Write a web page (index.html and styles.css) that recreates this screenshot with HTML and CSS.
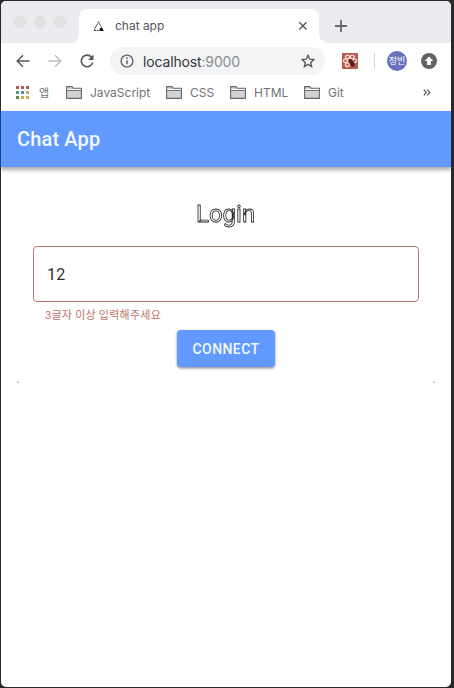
FILE: index.html
```html
<!DOCTYPE html>
<html lang="ko">
<head>
<meta charset="utf-8">
<title>chat app</title>
<link rel="stylesheet" href="styles.css">
</head>
<body>
<div class="window">
  <header class="tabs">
    <div class="lights"><i></i><i></i><i></i></div>
    <div class="tab">
      <svg class="favicon" width="12" height="11" viewBox="0 0 12 11"><path d="M5.500.8 1 9.500h9L5.500.8" fill="none" stroke="#444" stroke-width="1" stroke-dasharray="2 .5"/><path d="M6.500 7.500 9 6.500l1.700 3.500H7z" fill="#111"/></svg>
      <span class="tab-title">chat app</span>
      <svg class="close" width="10" height="10" viewBox="0 0 10 10"><path d="m1.300 1.300 7.200 7.200m0-7.200L1.300 8.500" fill="none" stroke="#5b5d60" stroke-width="1.500"/></svg>
    </div>
    <svg class="plus" width="12" height="12" viewBox="0 0 12 12"><path d="M6 0v12M0 6h12" stroke="#66686b" stroke-width="1.800"/></svg>
  </header>
  <nav class="toolbar">
    <svg class="back" width="14" height="14" viewBox="0 0 14 14"><path d="M13.500 7H1.400M7 1.200 1.200 7 7 12.800" fill="none" stroke="#56585b" stroke-width="1.500"/></svg>
    <svg class="forward" width="14" height="14" viewBox="0 0 14 14"><path d="M.5 7h12.100M7 1.200 12.800 7 7 12.800" fill="none" stroke="#bfc0c2" stroke-width="1.500"/></svg>
    <svg class="reload" width="14" height="14" viewBox="0 0 14 14"><path d="M11.600 3.200A5.800 5.800 0 1 0 12.700 8.500" fill="none" stroke="#56585b" stroke-width="1.600"/><path d="M13.500.5v5.600H8z" fill="#56585b"/></svg>
    <div class="address">
      <svg width="14" height="14" viewBox="0 0 14 14"><circle cx="7" cy="7" r="5.900" fill="none" stroke="#626468" stroke-width="1.400"/><path d="M7 6.200v4M7 3.600v1.500" stroke="#626468" stroke-width="1.500"/></svg>
      <span class="url">localhost<span>:9000</span></span>
      <svg class="star" width="14" height="14" viewBox="0 0 14 14"><path d="m7 1.300 1.650 3.900 4.250.4-3.200 2.800.95 4.150L7 10.350l-3.650 2.200.95-4.150L1.100 5.600l4.250-.4z" fill="none" stroke="#55575a" stroke-width="1.300"/></svg>
    </div>
    <svg class="extension" width="16" height="16" viewBox="0 0 16 16"><rect width="16" height="16" rx="1" fill="#b95a50"/><g fill="none" stroke="#fae5df" stroke-width="1.200"><circle cx="5.500" cy="4" r="1.900"/><circle cx="10.300" cy="4" r="1.900"/><circle cx="12.500" cy="7.800" r="1.900"/><circle cx="3.500" cy="7.800" r="1.900"/><circle cx="5.300" cy="11.700" r="1.900"/></g><path d="m7 6 3 .5 3 4.500-1 3-3-1-2-4z" fill="#55201d"/></svg>
    <i class="divider"></i>
    <span class="avatar">정빈</span>
    <svg class="update" width="16" height="16" viewBox="0 0 16 16"><circle cx="8" cy="8" r="8" fill="#626365"/><path d="m8 3.500 4.300 4.500H10v4H6V8H3.700z" fill="#fff"/></svg>
  </nav>
  <nav class="bookmarks">
    <span class="apps"><i></i><i></i><i></i><i></i><i></i><i></i><i></i><i></i><i></i></span>
    <span class="label apps-label">앱</span>
    <svg class="folder" width="16" height="13" viewBox="0 0 16 13"><path d="M.6 12.400V.6h5.200L7.300 2.200h8.100v10.200z" fill="#d2d2d2" stroke="#66676a" stroke-width="1.100"/><path d="M1.200 3.500h13.600" stroke="#fff"/><path d="M.6 4.500h14.800" stroke="#66676a" stroke-width=".9"/></svg>
    <span class="label js">JavaScript</span>
    <svg class="folder" width="16" height="13" viewBox="0 0 16 13"><path d="M.6 12.400V.6h5.200L7.300 2.200h8.100v10.200z" fill="#d2d2d2" stroke="#66676a" stroke-width="1.100"/><path d="M1.200 3.500h13.600" stroke="#fff"/><path d="M.6 4.500h14.800" stroke="#66676a" stroke-width=".9"/></svg>
    <span class="label css">CSS</span>
    <svg class="folder" width="16" height="13" viewBox="0 0 16 13"><path d="M.6 12.400V.6h5.200L7.300 2.200h8.100v10.200z" fill="#d2d2d2" stroke="#66676a" stroke-width="1.100"/><path d="M1.200 3.500h13.600" stroke="#fff"/><path d="M.6 4.500h14.800" stroke="#66676a" stroke-width=".9"/></svg>
    <span class="label html">HTML</span>
    <svg class="folder" width="16" height="13" viewBox="0 0 16 13"><path d="M.6 12.400V.6h5.200L7.300 2.200h8.100v10.200z" fill="#d2d2d2" stroke="#66676a" stroke-width="1.100"/><path d="M1.200 3.500h13.600" stroke="#fff"/><path d="M.6 4.500h14.800" stroke="#66676a" stroke-width=".9"/></svg>
    <span class="label git">Git</span>
    <svg class="more" width="8" height="7" viewBox="0 0 8 7"><path d="M.8.7 3.300 3.500.8 6.300M4.300.7l2.500 2.800-2.500 2.800" fill="none" stroke="#55575a" stroke-width="1.200"/></svg>
  </nav>
  <div class="appbar">Chat App</div>
  <main class="card">
    <h1>Login</h1>
    <input class="field" type="text" value="12">
    <p class="helper">3글자 이상 입력해주세요</p>
    <button class="connect">CONNECT</button>
    <div class="corners"><i></i><i></i></div>
  </main>
</div>
</body>
</html>
```

FILE: styles.css
```css
* { box-sizing: border-box; }
body {
  margin: 0;
  height: 688px;
  padding: 1px 3px 1px 1px;
  overflow: hidden;
  background: linear-gradient(#173f87, #173f87) 0 111px / 1px 56px no-repeat, #29292b;
  font-family: Roboto, "Noto Sans CJK KR", sans-serif;
}
svg { display: block; flex: none; }
.window {
  width: 450px;
  height: 686px;
  border-radius: 5px;
  overflow: hidden;
  background: #fff;
}
.tabs {
  display: flex;
  height: 42px;
  padding-top: 8px;
  background: #ebecef;
}
.lights { display: flex; gap: 8px; width: 78px; padding: 7px 0 0 13px; }
.lights i { width: 12px; height: 12px; border-radius: 50%; background: #e1e1e2; border: 1px solid #dcdddf; }
.tab {
  position: relative;
  display: flex;
  align-items: center;
  width: 240px;
  height: 34px;
  padding: 0 11px 0 14px;
  border-radius: 8px 8px 0 0;
  background: #fff;
}
.tab::before, .tab::after {
  content: "";
  position: absolute;
  bottom: 0;
  width: 8px;
  height: 8px;
}
.tab::before { left: -8px; background: radial-gradient(circle at 0 0, transparent 7.5px, #fff 8px); }
.tab::after { right: -8px; background: radial-gradient(circle at 100% 0, transparent 7.5px, #fff 8px); }
.tab-title, .url, .label { font-family: Inter, "Noto Sans CJK KR", sans-serif; }
.tab-title { margin: -2px 0 0 10px; font-size: 12px; letter-spacing: -.02px; color: #55575a; }
.close { margin-left: auto; }
.plus { margin: 11px 0 0 16px; }
.toolbar { display: flex; align-items: center; height: 36px; padding-left: 15px; }
.forward { margin-left: 18px; }
.reload { margin-left: 18px; }
.address {
  display: flex;
  align-items: center;
  width: 215px;
  height: 28px;
  margin-left: 16px;
  padding: 0 10px;
  border-radius: 14px;
  background: #f3f4f5;
}
.url { margin-left: 9px; font-size: 14px; letter-spacing: -.15px; color: #333539; }
.url span { color: #8a8c90; }
.star { margin-left: auto; }
.extension { margin-left: 17px; }
.divider { width: 1px; height: 16px; margin-left: 16px; background: #d3d4d6; }
.avatar {
  width: 20px;
  height: 20px;
  margin-left: 12px;
  border-radius: 50%;
  background: #6871bd;
  color: #fff;
  font: 9px/20px "Noto Sans CJK KR", sans-serif;
  text-align: center;
  white-space: nowrap;
}
.update { margin-left: 14px; }
.bookmarks { display: flex; align-items: center; height: 31px; padding: 0 20px 4px 15px; }
.apps { display: grid; grid-template-columns: repeat(3, 3px); gap: 2px; }
.apps i { width: 3px; height: 3px; background: #b75b55; }
.apps i:nth-child(4) { background: #55a477; }
.apps i:nth-child(5) { background: #6188bd; }
.apps i:nth-child(6) { background: #d2ab4d; }
.apps i:nth-child(7) { background: #498a61; }
.apps i:nth-child(n+8) { background: #d2ab4d; }
.label { flex: none; font-size: 12px; color: #707275; white-space: nowrap; }
.apps-label { width: 27px; margin: -2px 0 0 10px; font-size: 11px; }
.js { width: 76px; margin-left: 8px; }
.css { width: 40px; margin-left: 8px; }
.html { width: 50px; margin-left: 8px; }
.git { margin-left: 8px; }
.more { margin-left: auto; }
.appbar {
  height: 56px;
  margin-top: 1px;
  padding-left: 16px;
  background: #6199ff;
  color: #f4f8ff;
  font-size: 20px;
  font-weight: 500;
  line-height: 56px;
  letter-spacing: .15px;
  box-shadow: 0 2px 4px rgba(0,0,0,.3), 0 4px 5px rgba(0,0,0,.1);
}
.card { display: flex; flex-direction: column; align-items: center; width: 418px; margin: 17px 0 0 16px; height: 199px; }
h1 {
  margin: 16px 0 0;
  color: #fff;
  font-size: 24px;
  font-weight: 400;
  line-height: 28px;
  -webkit-text-stroke: .8px #222;
  will-change: transform;
}
.field {
  display: block;
  width: 386px;
  height: 56px;
  margin-top: 18px;
  padding: 0 13px;
  border: 1px solid #b97772;
  border-radius: 4px;
  outline: 0;
  background: transparent;
  color: #303030;
  font: 16px Roboto, sans-serif;
  letter-spacing: .15px;
}
.helper { align-self: flex-start; margin: 5px 0 0 28px; font-size: 11px; line-height: 18px; letter-spacing: .25px; color: #c0746c; }
.connect {
  width: 98px;
  height: 37px;
  margin-top: 5px;
  padding: 0;
  border: 0;
  border-radius: 4px;
  background: #6199ff;
  box-shadow: 0 1px 3px rgba(0,0,0,.35), 0 2px 2px rgba(0,0,0,.14);
  color: #f4f8ff;
  font: 500 14px Roboto, sans-serif;
  letter-spacing: .4px;
}
.corners { display: flex; justify-content: space-between; width: 100%; margin-top: auto; }
.corners i { width: 2px; height: 2px; border: solid #ccc; border-width: 0 0 1px 1px; }
.corners i:last-child { border-width: 0 1px 1px 0; }
```
